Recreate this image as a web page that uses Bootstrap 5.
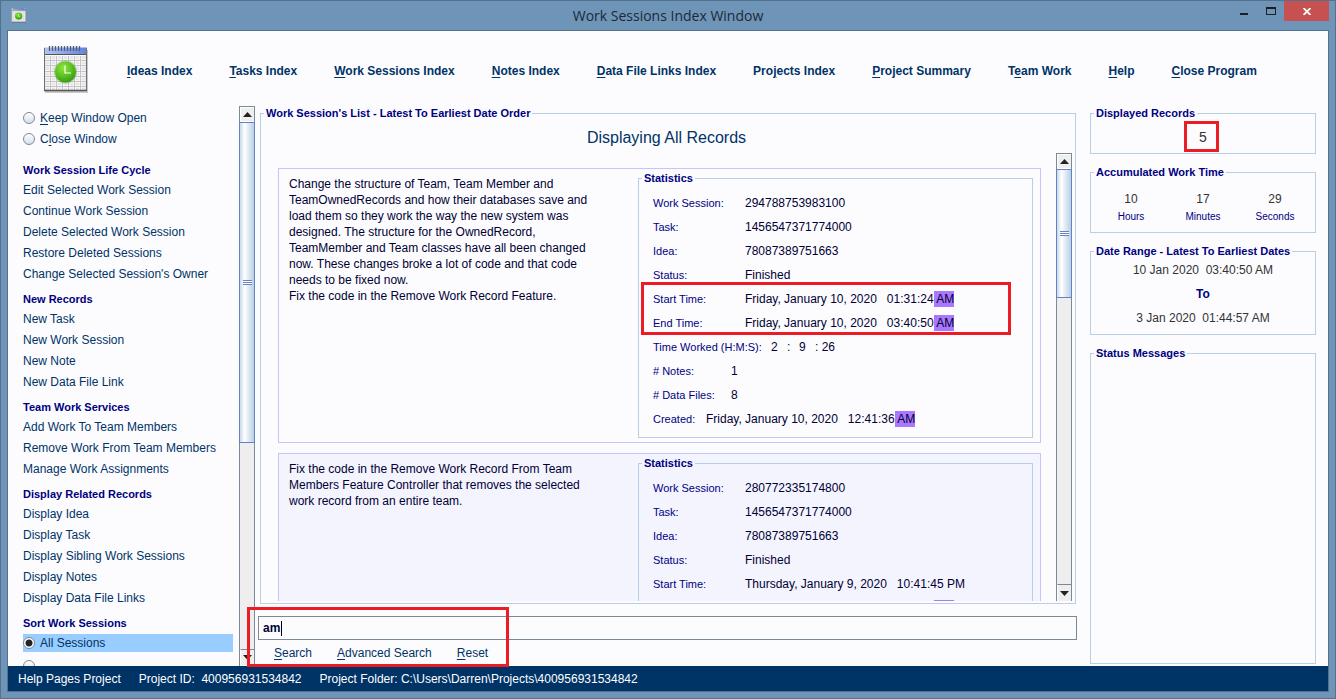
<!DOCTYPE html>
<html lang="en">
<head>
<meta charset="utf-8">
<meta name="viewport" content="width=device-width, initial-scale=1">
<title>Work Sessions Index Window</title>
<link href="https://cdn.jsdelivr.net/npm/bootstrap@5.3.0/dist/css/bootstrap.min.css" rel="stylesheet">
<style>
  body { font-family: "Liberation Sans", Arial, sans-serif; font-size: 12px; line-height: 16px; color: #000033; background: #6e94b7; }
  .app-window { height: 100vh; border: 1px solid #54728e; padding: 0 6px 6px; }
  .titlebar { height: 29px; font-family: "Open Sans", sans-serif; font-size: 14px; color: #1c2a38; }
  .win-controls { right: 0; top: 0; }
  .win-controls button { border: 0; background: none; height: 20px; width: 27px; padding: 0; display: flex; align-items: center; justify-content: center; }
  .win-controls .close-win { background: #c75050; width: 45px; }
  .frame { border: 1px solid #54728e; background: #fcfcff; min-height: 0; }
  .top-menu { height: 75px; padding-left: 32px; gap: 37px; padding-top: 4px; }
  .menu-links { gap: 37px; }
  .top-menu a { font-weight: 700; }
  .frame a { color: #003366; text-decoration: none; white-space: nowrap; }
  .frame a u, .frame label u { text-underline-offset: 2px; }
  .work-area { min-height: 0; }

  .sidebar { width: 247px; }
  .side-list { padding: 3px 6px 0 15px; gap: 3px; }
  .side-list a, .side-list label { display: flex; align-items: center; height: 18px; line-height: 18px; color: #003366; }
  .side-list h2 { font-size: 11px; font-weight: 700; line-height: 16px; color: #000080; margin: 0; padding-top: 5px; }
  .side-list .window-mode { gap: 3px; padding-bottom: 6px; }
  .side-list input[type=radio] { appearance: none; flex: none; width: 12px; height: 12px; margin: 0 5px 0 0; border: 1px solid #7a8a99; border-radius: 50%; background: linear-gradient(#fff, #d3dfeb); }
  .side-list input[type=radio]:checked { background: radial-gradient(circle, #222 0 3px, #fff 4px); }
  .side-list .picked { background: #99ccff; }

  .scroller { width: 16px; flex: none; background: #eee; border: 1px solid #7a8a99; border-width: 1px 1px 0 1px; }
  .scroller .arrow { height: 15px; flex: none; border: 1px solid #fff; border-right: 0; background: #eee; display: flex; align-items: center; justify-content: center; }
  .scroller .arrow.down { border-top-color: #7a8a99; height: 17px; }
  .scroller .thumb { margin: 0 -1px; border: 1px solid #6382bf; background: linear-gradient(90deg, #c8d9ea, #fff 32%, #b8cfe5); display: flex; align-items: center; justify-content: center; }
  .scroller .grip { width: 9px; height: 5px; background: repeating-linear-gradient(#6382bf 0 1px, #fff 1px 2px); }

  fieldset.group { border: 1px solid #b8cfe5; min-height: 0; }
  fieldset.group > legend { float: none; width: auto; margin: 0 0 0 3px; padding: 0 2px; font-size: 11px; font-weight: 700; line-height: 14px; color: #000080; text-align: left; }

  .main-col { width: 0; padding-left: 3px; }
  .main-col .list-group-box { margin: 0 1px 0 2px; padding: 0 3px 2px 0; }
  .list-title { font-size: 16px; line-height: 20px; color: #003366; font-weight: 400; margin: 8px 0 5px; }
  .record-view { min-height: 0; }
  .records { padding: 15px 15px 0 17px; gap: 10px; min-width: 0; }
  .record { border: 1px solid #c4c4ff; padding: 2px 7px 4px 10px; flex: none; }
  .record.alt { background: #f4f4ff; }
  .record .notes { width: 318px; padding-top: 5px; }
  .record fieldset { width: 52%; min-width: 395px; padding: 6px 14px 6px; }
  .record fieldset.group > legend { margin-left: -11px; }
  .stat-row { height: 24px; align-items: center; white-space: pre; }
  .stat-row .name { font-size: 11px; color: #000080; width: 92px; flex: none; }
  .stat-row .name.w-time { width: 118px; }
  .stat-row .name.w-count { width: 78px; }
  .stat-row .name.w-created { width: 53px; }
  .stat-row .hms { width: 16px; }
  .stat-row .minute { width: 12px; }
  .hit { background: #aa77ff; display: inline-block; }
  .callout { position: absolute; border: 3px solid #ed1c24; pointer-events: none; }
  .times .callout { inset: -5px 7px 0 -12px; }

  .search-area { padding: 12px 0 5px; }
  .search-area input { height: 24px; border: 1px solid #7a8a99; padding: 0 4px; font-weight: 700; color: #000033; background: #fcfcff; outline: 0; }
  .search-area .caret { position: absolute; left: 23px; top: 17px; width: 1px; height: 15px; background: #000; }
  .search-area .callout { left: -11px; top: 3px; width: 262px; bottom: -1px; }
  .search-area button { border: 0; background: none; padding: 0; color: #003366; }
  .search-area u { text-underline-offset: 2px; }
  .search-area .actions { padding: 5px 0 0 16px; gap: 25px; }

  .info-col { width: 251px; padding: 0 12px 2px 13px; gap: 11px; }
  .info-col .value { color: #333; }
  .info-col .count { font-size: 14px; line-height: 16px; padding: 9px 0 8px; }
  .info-col .count .callout { left: 50%; margin-left: -19px; top: 1px; bottom: 1px; width: 35px; }
  .info-col .unit { font-size: 10px; line-height: 14px; color: #000080; padding-top: 3px; }
  .info-col .to-word { color: #000080; }
  .statusbar { height: 25px; background: #003366; color: #fff; padding: 0 10px; gap: 18px; white-space: pre; }
</style>
</head>
<body>
<div class="app-window d-flex flex-column overflow-hidden">
  <header class="titlebar position-relative d-flex align-items-center justify-content-center flex-shrink-0">
    <svg class="position-absolute start-0 ms-1" width="15" height="15" viewBox="2 0 46 48" preserveAspectRatio="none" aria-hidden="true"><use href="#cal"/></svg>
    <span>Work Sessions Index Window</span>
    <div class="win-controls position-absolute d-flex">
      <button type="button" aria-label="Minimize"><svg width="8" height="10"><path d="M0 7h8v2H0z" fill="#1e1e1e"/></svg></button>
      <button type="button" aria-label="Maximize"><svg width="10" height="8"><path d="M0 0h10v8H0zM1 2v5h8V2z" fill="#1e1e1e" fill-rule="evenodd"/></svg></button>
      <button type="button" class="close-win" aria-label="Close"><svg width="8" height="7"><path d="M.5 0l7 7M7.500 0l-7 7" stroke="#fff" stroke-width="1.800"/></svg></button>
    </div>
  </header>

  <div class="frame d-flex flex-column flex-grow-1">
    <nav class="top-menu d-flex align-items-center flex-shrink-0">
      <svg width="50" height="50" viewBox="0 0 50 50" aria-hidden="true">
        <defs>
          <linearGradient id="bar" x1="0" x2="1"><stop offset="0" stop-color="#b4c6f7"/><stop offset="1" stop-color="#6482dc"/></linearGradient>
          <radialGradient id="green" cx=".4" cy=".3" r=".7"><stop offset="0" stop-color="#8fe83a"/><stop offset=".7" stop-color="#4fb81c"/><stop offset="1" stop-color="#3a9a1a"/></radialGradient>
          <g id="cal">
            <path d="M5 4h43v43H5z" fill="#000" opacity=".2"/>
            <path d="M4 2h43v43H4z" fill="#fafafa"/>
            <path d="M5 10h41v34H5z" fill="#e6e6e6"/>
            <path d="M4 1.500h43v7H4z" fill="url(#bar)"/>
            <path d="M10.500 10v34M16.500 10v34M22.500 10v34M28.500 10v34M34.500 10v34M40.500 10v34M5 14.500h41M5 19.500h41M5 25.500h41M5 30.500h41M5 35.500h41M5 40.500h41" stroke="#fff" stroke-width="2"/>
            <path d="M10.500 10v34M16.500 10v34M22.500 10v34M28.500 10v34M34.500 10v34M40.500 10v34M5 14.500h41M5 19.500h41M5 25.500h41M5 30.500h41M5 35.500h41M5 40.500h41" stroke="#c4c4c4" stroke-width="1"/>
            <path d="M4 8.500h43" stroke="#555" stroke-width="1"/>
            <path d="M4.500 2v42.500M46.500 2v42.500" stroke="#707070" stroke-width="1" fill="none"/>
            <path d="M4 44.500h43" stroke="#555" stroke-width="1.300"/>
            <path d="M9.500 0v5M12.500 0v5M15.500 0v5M18.500 0v5M21.500 0v5M24.500 0v5M27.500 0v5M30.500 0v5M33.500 0v5M36.500 0v5M39.500 0v5" stroke="#555c70" stroke-width="1.300"/>
            <circle cx="25.500" cy="26" r="11.500" fill="#3f9c20" opacity=".35"/>
            <circle cx="25.500" cy="26" r="10.500" fill="url(#green)"/>
            <path d="M25 19.500v7.500h6" stroke="#fff" stroke-width="1.200" fill="none"/>
          </g>
        </defs>
        <use href="#cal"/>
      </svg>
      <div class="menu-links d-flex">
        <a href="#"><u>I</u>deas Index</a>
        <a href="#"><u>T</u>asks Index</a>
        <a href="#"><u>W</u>ork Sessions Index</a>
        <a href="#"><u>N</u>otes Index</a>
        <a href="#"><u>D</u>ata File Links Index</a>
        <a href="#">Pro<u>j</u>ects Index</a>
        <a href="#"><u>P</u>roject Summary</a>
        <a href="#">T<u>e</u>am Work</a>
        <a href="#"><u>H</u>elp</a>
        <a href="#"><u>C</u>lose Program</a>
      </div>
    </nav>

    <div class="work-area d-flex flex-grow-1">
      <aside class="sidebar d-flex flex-shrink-0">
        <div class="side-list d-flex flex-column flex-grow-1 overflow-hidden">
          <div class="window-mode d-flex flex-column">
            <label><input type="radio" name="mode"><span><u>K</u>eep Window Open</span></label>
            <label><input type="radio" name="mode"><span>C<u>l</u>ose Window</span></label>
          </div>
          <h2>Work Session Life Cycle</h2>
          <a href="#">Edit Selected Work Session</a>
          <a href="#">Continue Work Session</a>
          <a href="#">Delete Selected Work Session</a>
          <a href="#">Restore Deleted Sessions</a>
          <a href="#">Change Selected Session's Owner</a>
          <h2>New Records</h2>
          <a href="#">New Task</a>
          <a href="#">New Work Session</a>
          <a href="#">New Note</a>
          <a href="#">New Data File Link</a>
          <h2>Team Work Services</h2>
          <a href="#">Add Work To Team Members</a>
          <a href="#">Remove Work From Team Members</a>
          <a href="#">Manage Work Assignments</a>
          <h2>Display Related Records</h2>
          <a href="#">Display Idea</a>
          <a href="#">Display Task</a>
          <a href="#">Display Sibling Work Sessions</a>
          <a href="#">Display Notes</a>
          <a href="#">Display Data File Links</a>
          <h2>Sort Work Sessions</h2>
          <label class="picked"><input type="radio" name="sort" checked><span>All Sessions</span></label>
          <label class="flex-shrink-0 pt-1"><input type="radio" name="sort" aria-label="Next sort option"></label>
        </div>
        <div class="scroller d-flex flex-column" aria-hidden="true">
          <div class="arrow"><svg width="9" height="5"><path d="M0 5L4.500 0 9 5z" fill="#222"/></svg></div>
          <div class="flex-grow-1"><div class="thumb" style="height:61%"><div class="grip"></div></div></div>
          <div class="arrow down"><svg width="9" height="5"><path d="M0 0L4.500 5 9 0z" fill="#222"/></svg></div>
        </div>
      </aside>

      <main class="main-col d-flex flex-column flex-grow-1">
        <fieldset class="group list-group-box d-flex flex-column flex-grow-1">
          <legend>Work Session's List - Latest To Earliest Date Order</legend>
          <h1 class="list-title text-center">Displaying All Records</h1>
          <div class="record-view d-flex flex-grow-1">
            <div class="records d-flex flex-column flex-grow-1 overflow-hidden">
              <article class="record d-flex justify-content-between">
                <div class="notes">Change the structure of Team, Team Member and TeamOwnedRecords and how their databases save and load them so they work the way the new system was designed. The structure for the OwnedRecord, TeamMember and Team classes have all been changed now. These changes broke a lot of code and that code needs to be fixed now.<br>Fix the code in the Remove Work Record Feature.</div>
                <fieldset class="group">
                  <legend>Statistics</legend>
                  <div class="stat-row d-flex"><span class="name">Work Session:</span><span>294788753983100</span></div>
                  <div class="stat-row d-flex"><span class="name">Task:</span><span>1456547371774000</span></div>
                  <div class="stat-row d-flex"><span class="name">Idea:</span><span>78087389751663</span></div>
                  <div class="stat-row d-flex"><span class="name">Status:</span><span>Finished</span></div>
                  <div class="times position-relative">
                    <div class="stat-row d-flex"><span class="name">Start Time:</span><span>Friday, January 10, 2020   01:31:24<span class="hit"> AM</span></span></div>
                    <div class="stat-row d-flex"><span class="name">End Time:</span><span>Friday, January 10, 2020   03:40:50<span class="hit"> AM</span></span></div>
                    <div class="callout"></div>
                  </div>
                  <div class="stat-row d-flex"><span class="name w-time">Time Worked (H:M:S):</span><span class="hms">2</span><span class="minute">:</span><span class="hms">9</span><span>: 26</span></div>
                  <div class="stat-row d-flex"><span class="name w-count"># Notes:</span><span>1</span></div>
                  <div class="stat-row d-flex"><span class="name w-count"># Data Files:</span><span>8</span></div>
                  <div class="stat-row d-flex"><span class="name w-created">Created:</span><span>Friday, January 10, 2020   12:41:36<span class="hit"> AM</span></span></div>
                </fieldset>
              </article>
              <article class="record alt d-flex justify-content-between">
                <div class="notes">Fix the code in the Remove Work Record From Team Members Feature Controller that removes the selected work record from an entire team.</div>
                <fieldset class="group">
                  <legend>Statistics</legend>
                  <div class="stat-row d-flex"><span class="name">Work Session:</span><span>280772335174800</span></div>
                  <div class="stat-row d-flex"><span class="name">Task:</span><span>1456547371774000</span></div>
                  <div class="stat-row d-flex"><span class="name">Idea:</span><span>78087389751663</span></div>
                  <div class="stat-row d-flex"><span class="name">Status:</span><span>Finished</span></div>
                  <div class="stat-row d-flex"><span class="name">Start Time:</span><span>Thursday, January 9, 2020   10:41:45 PM</span></div>
                  <div class="stat-row d-flex"><span class="name">End Time:</span><span>Friday, January 10, 2020   12:41:36<span class="hit"> AM</span></span></div>
                </fieldset>
              </article>
            </div>
            <div class="scroller d-flex flex-column" aria-hidden="true">
              <div class="arrow"><svg width="9" height="5"><path d="M0 5L4.500 0 9 5z" fill="#222"/></svg></div>
              <div class="flex-grow-1"><div class="thumb" style="height:31%"><div class="grip"></div></div></div>
              <div class="arrow down border-bottom-0"><svg width="9" height="5"><path d="M0 0L4.500 5 9 0z" fill="#222"/></svg></div>
            </div>
          </div>
        </fieldset>

        <form class="search-area position-relative" onsubmit="return false">
          <input class="w-100 d-block" type="text" value="am" aria-label="Search text">
          <span class="caret"></span>
          <div class="actions d-flex">
            <button type="button"><u>S</u>earch</button>
            <button type="button"><u>A</u>dvanced Search</button>
            <button type="button"><u>R</u>eset</button>
          </div>
          <div class="callout"></div>
        </form>
      </main>

      <aside class="info-col d-flex flex-column flex-shrink-0 text-center">
        <fieldset class="group">
          <legend>Displayed Records</legend>
          <div class="count value position-relative">5<div class="callout"></div></div>
        </fieldset>
        <fieldset class="group">
          <legend>Accumulated Work Time</legend>
          <div class="row g-0 pt-2 mt-1 pb-2 px-1">
            <div class="col"><div class="value">10</div><div class="unit">Hours</div></div>
            <div class="col"><div class="value">17</div><div class="unit">Minutes</div></div>
            <div class="col"><div class="value">29</div><div class="unit">Seconds</div></div>
          </div>
        </fieldset>
        <fieldset class="group">
          <legend>Date Range - Latest To Earliest Dates</legend>
          <div class="d-flex flex-column gap-2 pt-1 pb-2">
            <span class="value">10 Jan 2020 &nbsp;03:40:50 AM</span>
            <b class="to-word">To</b>
            <span class="value">3 Jan 2020 &nbsp;01:44:57 AM</span>
          </div>
        </fieldset>
        <fieldset class="group flex-grow-1">
          <legend>Status Messages</legend>
        </fieldset>
      </aside>
    </div>

    <footer class="statusbar d-flex align-items-center flex-shrink-0"><span>Help Pages Project</span><span>Project ID:  400956931534842</span><span>Project Folder: C:\Users\Darren\Projects\400956931534842</span></footer>
  </div>
</div>
<script src="https://cdn.jsdelivr.net/npm/bootstrap@5.3.0/dist/js/bootstrap.bundle.min.js"></script>
</body>
</html>
